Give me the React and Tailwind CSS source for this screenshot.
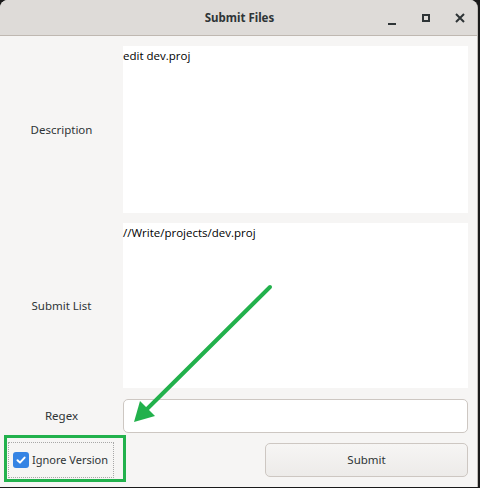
export default function App() {
  return (
    <div className="w-[480px] h-[488px] bg-[#1a1a1a] relative overflow-hidden" style={{ fontFamily: '"Noto Sans", "Open Sans", sans-serif' }}>
      <div className="w-[478px] h-[487px] bg-[#f6f5f4] rounded-t-[8px] flex flex-col border-r border-[#c0bdb8] overflow-hidden">
        <div className="h-9 shrink-0 bg-[#dedbd8] border-b border-[#bfb8b1] flex items-center relative">
          <div className="flex-1 text-center text-[11.5px] font-bold text-[#2e3436] pl-[2px]">Submit Files</div>
          <div className="absolute right-0 top-0 h-9 flex items-center">
            <div className="w-[34px] flex justify-center items-end h-4">
              <div className="w-[8px] h-[2px] bg-[#2e3436] mb-[1px]" />
            </div>
            <div className="w-[34px] flex justify-center">
              <div className="w-[8px] h-[8px] border-2 border-[#2e3436]" />
            </div>
            <div className="w-[34px] flex justify-center">
              <svg width="10" height="10" viewBox="0 0 10 10"><path d="M1 1 L9 9 M9 1 L1 9" stroke="#2e3436" strokeWidth="2" /></svg>
            </div>
          </div>
        </div>
        <div className="flex flex-col pt-[10px] pr-[9px] gap-[10px]">
          <div className="flex h-[167px]">
            <div className="w-[123px] flex items-center justify-center text-[11.5px] text-[#2e3436]">Description</div>
            <div className="flex-1 bg-white text-[11.5px] text-black leading-[18px] pt-[1px]" style={{ fontFamily: '"Open Sans", sans-serif' }}>edit dev.proj</div>
          </div>
          <div className="flex h-[165px]">
            <div className="w-[123px] flex items-center justify-center text-[11.5px] text-[#2e3436]">Submit List</div>
            <div className="flex-1 bg-white text-[11.5px] text-black leading-[18px] pt-[1px]" style={{ fontFamily: '"Open Sans", sans-serif' }}>//Write/projects/dev.proj</div>
          </div>
          <div className="flex h-[34px] mt-[1px]">
            <div className="w-[123px] flex items-center justify-center text-[11.5px] text-[#2e3436]">Regex</div>
            <div className="flex-1 bg-white border border-[#cdc7c2] rounded-[5px]" />
          </div>
          <div className="flex h-[34px] items-center">
            <div className="w-[265px] pl-[8px] flex">
              <div className="h-[36px] w-[106px] border border-dotted border-[#a8a8a8] flex items-center gap-[3px] pl-[4px] whitespace-nowrap">
                <div className="w-[16px] h-[16px] shrink-0 rounded-[3px] bg-[#3584e4] flex items-center justify-center">
                  <svg width="12" height="12" viewBox="0 0 12 12"><path d="M2.5 6.2 L5 8.6 L9.6 3.6" stroke="white" strokeWidth="2" fill="none" strokeLinecap="round" strokeLinejoin="round" /></svg>
                </div>
                <span className="text-[11px] text-[#2e3436]">Ignore Version</span>
              </div>
            </div>
            <div className="flex-1 h-[34px] border border-[#cdc7c2] rounded-[5px] bg-gradient-to-b from-[#f6f5f4] to-[#edebe9] flex items-center justify-center text-[11.5px] text-[#2e3436]">Submit</div>
          </div>
        </div>
      </div>
      <div className="absolute left-[4px] top-[435px] w-[122px] h-[47px] border-[3px] border-[#22b14c]" />
      <svg className="absolute left-0 top-0" width="480" height="488" viewBox="0 0 480 488">
        <line x1="270" y1="287" x2="143" y2="413" stroke="#22b14c" strokeWidth="4" strokeLinecap="round" />
        <polygon points="134,422 140,401 155,416" fill="#22b14c" />
      </svg>
    </div>
  );
}
